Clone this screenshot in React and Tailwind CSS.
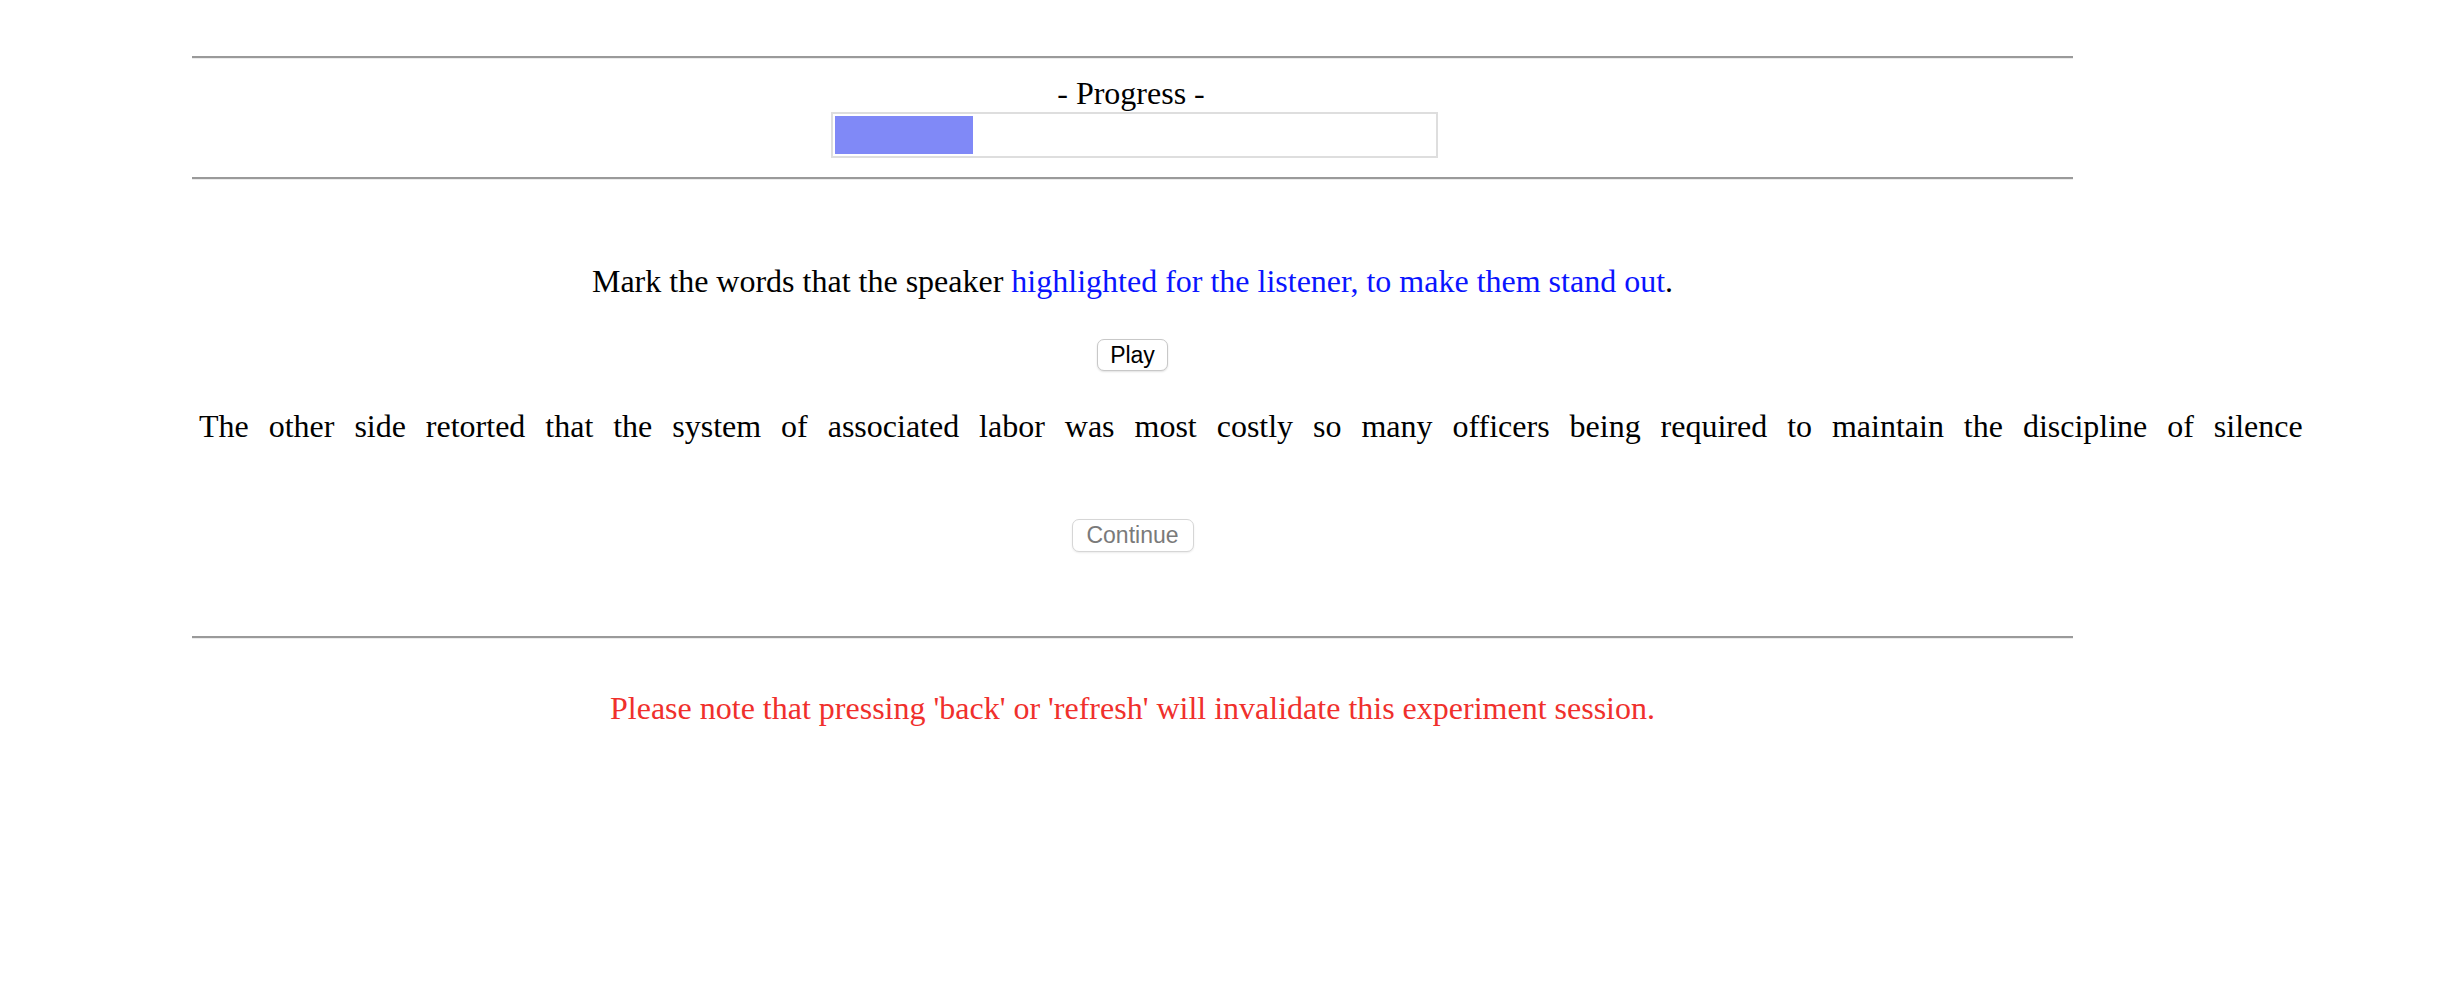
import React from "react";

const WORDS =
  "The other side retorted that the system of associated labor was most costly so many officers being required to maintain the discipline of silence".split(
    " "
  );

const Rule = ({ className = "" }) => (
  <div
    className={`w-[1881px] border-t-2 border-b border-t-[#9a9a9a] border-b-[#ececec] ${className}`}
  />
);

const App = () => {
  return (
    <div className="min-h-screen bg-white text-black font-['Liberation_Serif',serif] text-[32px] leading-[37px]">
      <div className="pl-[192px] pt-[56px]">
        <Rule />

        <div className="w-[1881px] flex flex-col items-center">
          <div className="mt-[16px] -ml-[3px]">- Progress -</div>
          <div className="ml-[3px] w-[607px] h-[46px] border-2 border-[#dedede] p-[2px] bg-white">
            <div className="h-full w-[138px] bg-[#8089f7]" />
          </div>
        </div>

        <Rule className="mt-[19px]" />

        <div className="w-[1881px] flex flex-col items-center">
          <p className="mt-[83px]">
            Mark the words that the speaker{" "}
            <span className="text-[#0a14ff]">
              highlighted for the listener, to make them stand out
            </span>
            .
          </p>

          <button className="mt-[39px] h-[32px] w-[71px] rounded-[7px] border border-[#c8c8c8] bg-white shadow-[0_1px_2px_rgba(0,0,0,0.12)] font-['Liberation_Sans',sans-serif] text-[23px] leading-none text-black">
            Play
          </button>
        </div>

        <div className="mt-[37px] ml-[7px] w-[2104px] flex justify-between">
          {WORDS.map((w, i) => (
            <span key={i}>{w}</span>
          ))}
        </div>

        <div className="w-[1881px] flex flex-col items-center">
          <button
            disabled
            className="mt-[74px] h-[33px] w-[122px] rounded-[7px] border border-[#d6d6d6] bg-white shadow-[0_1px_2px_rgba(0,0,0,0.08)] font-['Liberation_Sans',sans-serif] text-[23px] leading-none text-[#7a7a7a]"
          >
            Continue
          </button>
        </div>

        <Rule className="mt-[84px]" />

        <div className="w-[1881px] flex justify-center">
          <p className="mt-[51px] text-[#f0302c]">
            Please note that pressing 'back' or 'refresh' will invalidate this experiment session.
          </p>
        </div>
      </div>
    </div>
  );
};

export default App;
